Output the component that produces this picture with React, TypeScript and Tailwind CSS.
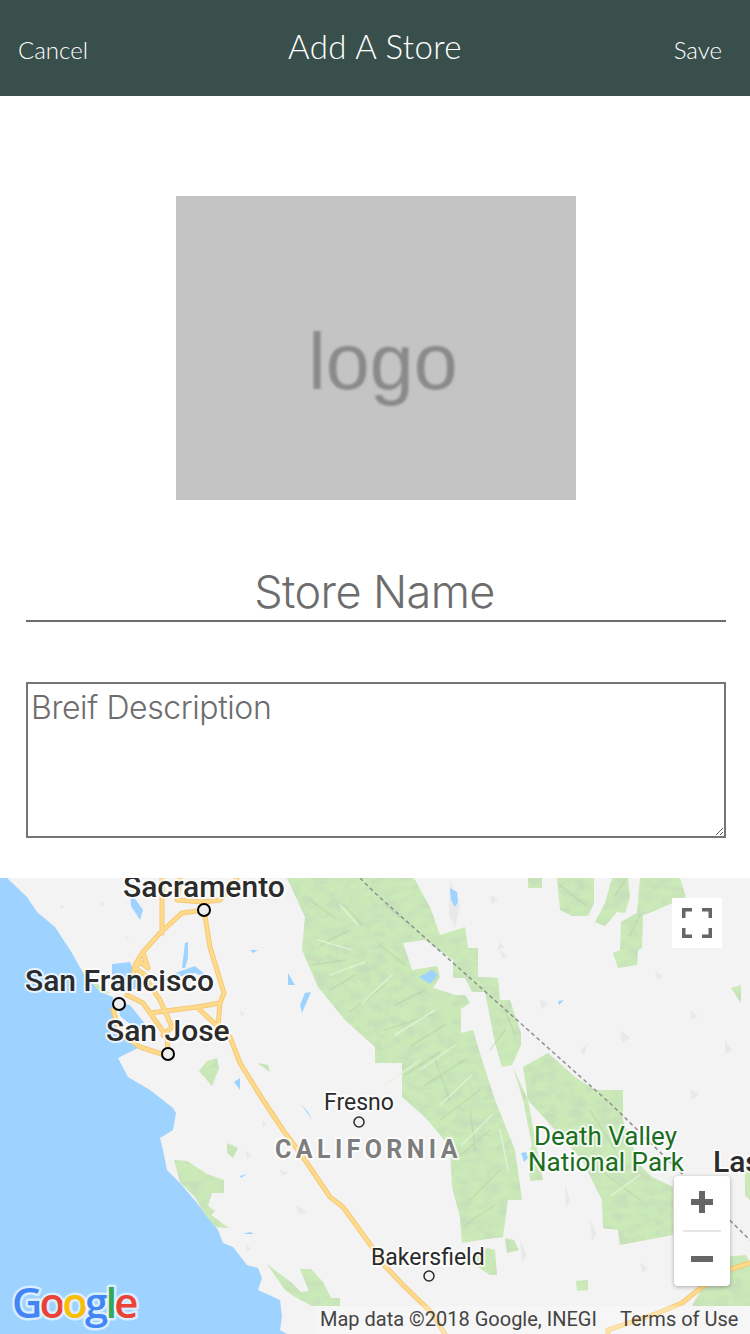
const parks = [
  // central sierra block
  'M287,878 L305,917 L302,950 L318,987 L345,1020 L375,1047 L375,1063 L402,1063 L402,1097 L425,1117 L450,1147 L452,1187 L460,1217 L462,1243 L480,1240 L503,1237 L508,1200 L522,1200 L515,1150 L495,1100 L483,1063 L473,1030 L461,1033 L461,1009 L470,1003 L465,995 L455,995 L440,990 L433,988 L440,977 L437,966 L412,970 L403,943 L425,940 L453,960 L453,978 L465,978 L472,992 L485,992 L495,1043 L502,1067 L512,1065 L521,1045 L521,1033 L510,1000 L500,1000 L498,978 L478,977 L478,948 L468,948 L465,927 L440,935 L430,907 L415,880 L412,878 Z',
  'M513,1067 L523,1100 L532,1145 L528,1155 L530,1181 L543,1180 L538,1155 L528,1100 Z',
  // death valley
  'M523,1067 L548,1053 L575,1077 L595,1090 L623,1090 L623,1120 L640,1165 L652,1177 L673,1187 L673,1235 L620,1245 L618,1230 L603,1228 L602,1200 L582,1160 L528,1100 Z',
  // north east
  'M528,878 L542,878 L542,888 L528,888 Z',
  'M557,878 L560,910 L572,916 L588,916 L594,903 L594,878 Z',
  'M612,878 L605,903 L595,922 L605,926 L617,912 L625,913 L630,897 L628,878 Z',
  'M640,878 L637,913 L621,922 L620,950 L613,953 L618,968 L637,965 L638,950 L642,948 L643,915 L652,912 L686,897 L680,878 Z',
  'M731,988 L741,985 L741,1003 Z',
  // bay area and coast
  'M68,950 L85,975 L110,993 L100,994 L80,985 L66,968 Z',
  'M207,1061 L217,1058 L219,1068 L212,1086 L199,1071 Z',
  'M257,1063 L268,1065 L270,1072 Z',
  'M227,1143 L238,1148 L233,1158 L227,1153 Z',
  'M174,1160 L187,1161 L207,1174 L224,1180 L224,1193 L212,1193 L208,1206 L215,1211 L211,1215 L229,1228 L215,1227 L205,1215 L195,1197 L180,1182 Z',
  'M267,1264 L280,1274 L292,1283 L301,1292 L309,1291 L300,1269 L311,1269 L323,1282 L331,1298 L340,1298 L340,1306 L312,1306 L295,1297 L285,1290 Z',
  // south of the sierra
  'M505,1238 L514,1240 L519,1250 L507,1253 Z',
  'M458,1266 L487,1248 L495,1250 L497,1275 L490,1275 L475,1265 Z',
  'M576,1281 L588,1280 L588,1290 L577,1291 Z',
  'M690,1260 L746,1255 L750,1263 L750,1306 L692,1306 L702,1288 L728,1272 Z',
  'M745,1160 L750,1160 L750,1200 L745,1195 Z',
]

const water = [
  'M0,878 L7,878 L27,897 L37,912 L55,927 L72,953 L83,973 L100,992 L113,997 L112,1010 L120,1033 L140,1047 L118,1058 L128,1077 L150,1090 L173,1108 L176,1113 L173,1130 L165,1135 L160,1138 L163,1150 L167,1170 L180,1183 L197,1203 L207,1217 L218,1230 L223,1243 L233,1247 L247,1265 L258,1268 L262,1278 L258,1290 L280,1300 L282,1317 L280,1330 L287,1334 L0,1334 Z',
  'M112,964 L130,962 L135,975 L150,985 L122,992 L112,982 Z',
  'M119,1003 L130,1005 L150,1030 L135,1028 L120,1016 Z',
  'M130,892 L136,900 L143,910 L140,920 L131,906 Z',
  'M185,943 L188,942 L188,958 L185,968 L182,968 Z',
  'M150,985 L178,972 L195,966 L212,980 L195,973 L178,977 Z',
  'M250,950 L258,950 L253,953 Z',
  'M288,973 L295,985 L288,985 Z',
  'M305,993 L311,992 L302,1013 L300,1005 Z',
  'M234,1082 L240,1078 L240,1090 Z',
  'M450,888 L457,892 L458,902 L455,907 L451,900 Z',
  'M419,977 L432,970 L438,975 L430,984 Z',
  'M558,1001 L564,1000 L559,1005 Z',
  'M521,1153 L526,1152 L528,1158 L524,1162 Z',
  'M301,1104 L308,1112 L312,1120 Z',
  'M240,1176 L247,1174 L241,1178 Z',
  'M243,1234 L250,1232 L254,1234 Z',
]

const roads = [
  'M204,910 L210,947 L220,980 L224,993 L220,1003 L218,1026 L230,1037',
  'M204,910 L182,913 L160,933 L143,952 L135,965 L133,976',
  'M162,878 L162,933',
  'M180,878 L177,900 L203,902 L220,900 L237,878',
  'M143,952 L148,968 L140,962 L135,968 L145,975 L150,985',
  'M127,995 L143,1003 L167,1037 L168,1054',
  'M150,985 L160,1000 L172,1027 L163,1035',
  'M150,1013 L197,1007 L220,1003',
  'M198,1008 L217,1026',
  'M113,1010 L120,1033 L140,1047 L168,1056',
  'M230,1037 L240,1063 L263,1100 L283,1130 L303,1157 L330,1197 L343,1207 L372,1247 L382,1263 L405,1287 L432,1313 L445,1334',
]

const fadedRoads = 'M750,1263 L728,1270 L698,1290 L682,1303 L658,1313 L608,1330 L608,1334'

const relief = [
  'M310,900 L335,918 M345,905 L362,925 M320,945 L350,930 M312,965 L345,960 M330,990 L355,975 M350,1012 L385,985',
  'M385,905 L410,925 M380,945 L405,965 M395,1005 L425,990 M385,1030 L430,1015 M412,1045 L445,1025 M405,1075 L440,1052',
  'M425,1085 L465,1060 M440,1120 L480,1090 M455,1160 L490,1130 M470,1200 L500,1170 M465,1225 L495,1205',
  'M505,1010 L515,1035 M490,1050 L505,1030 M435,1060 L450,1100 M470,1110 L475,1150',
  'M560,885 L585,905 M615,895 L625,880 M630,935 L640,915 M590,1110 L615,1150 M600,1170 L640,1200',
]

const reliefLight = [
  'M340,905 L358,925 M318,940 L352,950 M330,975 L365,962 M362,1003 L392,975',
  'M395,1035 L435,1010 M420,1070 L455,1045 M440,1105 L472,1075 M462,1145 L492,1115',
  'M385,1085 L420,1060 M500,1130 L508,1170 M612,1195 L640,1175',
]

const landMarks = [
  'M100,900 L105,904 L101,906 Z', 'M60,905 L65,907 L61,909 Z', 'M125,935 L130,939 L126,940 Z', 'M240,1010 L245,1014 L241,1017 Z',
  'M262,1120 L267,1125 L263,1127 Z', 'M245,1150 L251,1155 L247,1159 Z', 'M280,1170 L288,1173 L282,1176 Z', 'M295,1205 L308,1212 L299,1214 Z',
  'M245,1243 L251,1249 L247,1251 Z', 'M540,1000 L548,1003 L542,1010 Z', 'M490,895 L498,899 L492,905 Z', 'M500,950 L508,956 L502,959 Z',
  'M655,970 L663,976 L657,980 Z', 'M690,1010 L698,1016 L692,1020 Z', 'M580,1050 L588,1043 L584,1056 Z', 'M620,1030 L630,1038 L622,1043 Z',
  'M565,1185 L570,1200 L566,1208 Z', 'M590,1220 L597,1234 L592,1241 Z', 'M520,1240 L527,1255 L522,1263 Z', 'M450,880 L460,906 L455,928 L449,915 Z',
  'M500,942 L504,947 L497,950 Z', 'M690,1090 L700,1094 L692,1100 Z', 'M725,1040 L732,1050 L725,1054 Z', 'M640,1262 L648,1269 L642,1273 Z',
]

function MapLabel({ x, y, size, fill, weight = 500, spacing, children }: { x: number; y: number; size: number; fill: string; weight?: number; spacing?: number; children: string }) {
  return (
    <text
      x={x}
      y={y}
      fontSize={size}
      fontWeight={weight}
      fill={fill}
      letterSpacing={spacing}
      stroke="#ffffff"
      strokeOpacity={0.75}
      strokeWidth={4}
      strokeLinejoin="round"
      paintOrder="stroke"
    >
      {children}
    </text>
  )
}

function Pin({ x, y, r = 6 }: { x: number; y: number; r?: number }) {
  return <circle cx={x} cy={y} r={r} fill="#eeeeee" stroke="#000000" strokeWidth={2} />
}

function MapArt() {
  return (
    <svg viewBox="0 878 750 456" className="block h-full w-full [font-family:Roboto,sans-serif]">
      <defs>
        <filter id="terrain" x="0" y="0" width="100%" height="100%">
          <feTurbulence type="fractalNoise" baseFrequency="0.07 0.11" numOctaves={3} seed={4} />
          <feColorMatrix values="0 0 0 0 0.55  0 0 0 0 0.68  0 0 0 0 0.5  1.6 0 0 0 -0.62" />
          <feComposite in2="SourceGraphic" operator="in" result="shade" />
          <feMerge>
            <feMergeNode in="SourceGraphic" />
            <feMergeNode in="shade" />
          </feMerge>
        </filter>
      </defs>
      <rect x="0" y="878" width="750" height="456" fill="#f3f3f3" />
      <g fill="#e9e9e9">
        {landMarks.map((d) => (
          <path key={d} d={d} />
        ))}
      </g>
      <g fill="#cbeab8" filter="url(#terrain)">
        {parks.map((d) => (
          <path key={d} d={d} />
        ))}
      </g>
      <path d={relief.join(' ')} fill="none" stroke="#a9c99a" strokeWidth={1.5} strokeLinecap="round" opacity={0.35} />
      <path d={reliefLight.join(' ')} fill="none" stroke="#e4f5d8" strokeWidth={1.5} strokeLinecap="round" opacity={0.8} />
      <g fill="#9fd3ff">
        {water.map((d) => (
          <path key={d} d={d} />
        ))}
      </g>
      <path d="M360,878 L375,893 L612,1105 L665,1157 L750,1240" fill="none" stroke="#8f8f8f" strokeWidth={1.5} strokeDasharray="4 3" />
      <g fill="none" strokeLinejoin="round" strokeLinecap="round">
        <path d={roads.join(' ')} stroke="#f6c877" strokeWidth={5} />
        <path d={roads.join(' ')} stroke="#fddb8b" strokeWidth={3} />
        <path d={fadedRoads} stroke="#f6c877" strokeWidth={5} />
        <path d={fadedRoads} stroke="#fddb8b" strokeWidth={3} />
      </g>
      <rect x="316" y="1306" width="434" height="28" fill="#ffffff" opacity={0.25} />

      <MapLabel x={123} y={897} size={30} fill="#2b2b2b">Sacramento</MapLabel>
      <MapLabel x={25} y={991} size={30} fill="#2b2b2b">San Francisco</MapLabel>
      <MapLabel x={106} y={1041} size={30} fill="#2b2b2b">San Jose</MapLabel>
      <MapLabel x={324} y={1110} size={23} weight={400} fill="#2b2b2b">Fresno</MapLabel>
      <MapLabel x={275} y={1158} size={25} weight={700} spacing={4.4} fill="#7d7d7d">CALIFORNIA</MapLabel>
      <MapLabel x={534} y={1145} size={26} weight={400} fill="#1a6e1f">Death Valley</MapLabel>
      <MapLabel x={528} y={1171} size={26} weight={400} fill="#1a6e1f">National Park</MapLabel>
      <MapLabel x={371} y={1265} size={23} weight={400} fill="#2b2b2b">Bakersfield</MapLabel>
      <MapLabel x={713} y={1172} size={30} fill="#2b2b2b">Las</MapLabel>

      <Pin x={204} y={910} />
      <Pin x={119} y={1004} />
      <Pin x={168} y={1054} />
      <circle cx={359} cy={1122} r={5} fill="#f3f3f3" stroke="#2b2b2b" strokeWidth={1.5} />
      <circle cx={429} cy={1276} r={5} fill="#f3f3f3" stroke="#2b2b2b" strokeWidth={1.5} />

      <text x={12} y={1318} fontSize={42} fontWeight={600} letterSpacing={-2.9} stroke="#ffffff" strokeOpacity={0.6} strokeWidth={5} strokeLinejoin="round" paintOrder="stroke" className="[font-family:'Open_Sans',sans-serif]">
        <tspan fill="#4285f4">G</tspan>
        <tspan fill="#ea4335">o</tspan>
        <tspan fill="#fbbc05">o</tspan>
        <tspan fill="#4285f4">g</tspan>
        <tspan fill="#34a853">l</tspan>
        <tspan fill="#ea4335">e</tspan>
      </text>
      <text x={320} y={1326} fontSize={20} fill="#444444">Map data ©2018 Google, INEGI</text>
      <text x={620} y={1326} fontSize={20} fill="#444444">Terms of Use</text>
    </svg>
  )
}

export default function App() {
  return (
    <div className="flex h-[1334px] w-[750px] flex-col overflow-hidden bg-white [font-family:Inter,sans-serif]">
      <header className="flex h-24 shrink-0 items-center justify-between bg-[#394f4b] pb-[3px] pl-[18px] pr-[28px] text-white [font-family:Lato,sans-serif]">
        <span className="w-[110px] pt-[7px] text-[24px] font-light leading-none">Cancel</span>
        <span className="text-[33px] font-light leading-none tracking-[0.4px]">Add A Store</span>
        <span className="w-[100px] pt-[7px] text-right text-[24px] font-light leading-none">Save</span>
      </header>

      <main className="flex flex-col items-center pl-[2px] pt-[100px]">
        <div className="flex h-[304px] w-[400px] items-center justify-center bg-[#c4c4c4] pl-[14px] pt-[26px]">
          <span className="text-[79px] leading-none text-[#8a8a8a] blur-[1px] [font-family:'Liberation_Sans',sans-serif]">logo</span>
        </div>

        <div className="mt-[62px] h-[60px] w-[700px] border-b-2 border-[#6d6d6d] pr-[3px] text-center text-[45px] font-[350] leading-[60px] tracking-[-0.6px] text-[#6d6d6d]">
          Store Name
        </div>

        <textarea
          readOnly
          defaultValue="Breif Description"
          className="mt-[60px] block h-[156px] w-[700px] border-2 border-[#757575] py-[4px] pl-[3px] pr-1 text-[32px] font-[350] leading-[40px] tracking-[-0.4px] text-[#6d6d6d] outline-none"
        />
      </main>

      <section className="relative mt-[40px] h-[456px] shrink-0">
        <MapArt />

        <div className="absolute left-[672px] top-[20px] flex h-[50px] w-[50px] items-center justify-center bg-white">
          <svg width="30" height="30" viewBox="0 0 30 30" fill="none" stroke="#666666" strokeWidth="3.5">
            <path d="M1.75,10 V1.75 H10 M20,1.75 H28.25 V10 M1.75,20 V28.25 H10 M20,28.25 H28.25 V20" />
          </svg>
        </div>

        <div className="absolute left-[674px] top-[298px] flex h-[110px] w-[56px] flex-col items-center rounded-[4px] bg-white shadow-[0_1px_4px_rgba(0,0,0,0.3)]">
          <div className="flex h-[52px] w-full items-center justify-center">
            <svg width="22" height="22" viewBox="0 0 22 22" fill="#666666">
              <path d="M8,0 H14 V8 H22 V14 H14 V22 H8 V14 H0 V8 H8 Z" />
            </svg>
          </div>
          <div className="mt-[2px] h-[2px] w-[38px] bg-[#e6e6e6]" />
          <div className="flex h-[54px] w-full items-center justify-center">
            <div className="h-[6px] w-[22px] bg-[#666666]" />
          </div>
        </div>
      </section>
    </div>
  )
}
